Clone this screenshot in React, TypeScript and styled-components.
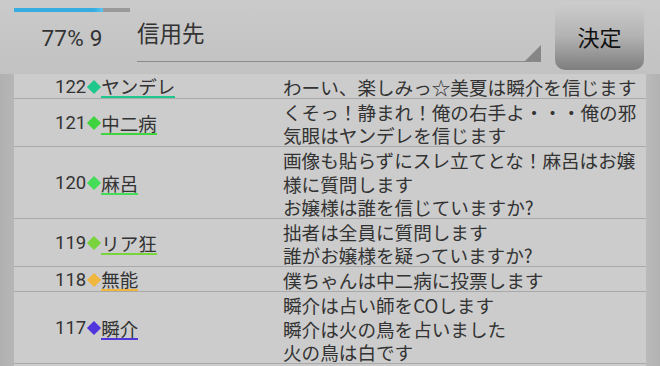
import React from "react";
import styled, { createGlobalStyle } from "styled-components";

const Global = createGlobalStyle`
  html, body { margin: 0; padding: 0; }
  body {
    width: 660px; height: 366px; overflow: hidden;
    background: #c3c3c3;
    font-family: Roboto, "Noto Sans CJK JP", sans-serif;
    color: #333;
  }
`;

const Page = styled.div`
  width: 660px; height: 366px; display: flex; flex-direction: column; overflow: hidden;
  background: linear-gradient(to bottom, #cacaca 0px, #c2c2c2 73px, #bdbdbd 100%);
`;

const Header = styled.div`
  height: 74px; display: flex; align-items: stretch; flex-shrink: 0;
`;

const Status = styled.div`
  width: 116px; margin-left: 14px; padding-top: 8px;
  display: flex; flex-direction: column; align-items: center;
`;

const Bar = styled.div`
  width: 100%; height: 4px; background: #999; overflow: hidden;
`;

const BarFill = styled.div`
  height: 100%; background: linear-gradient(to right, #36ace0 90%, #5cc6f0);
`;

const StatusText = styled.div`
  margin-top: 13px; font-family: Roboto, sans-serif; font-size: 22.5px; color: #333;
  letter-spacing: 0.2px;
`;

const Spinner = styled.div`
  margin-left: 7px; width: 404px; height: 62px; position: relative;
  border-bottom: 1px solid #8a8a8a; box-sizing: border-box;
  display: flex; align-items: center; padding-top: 3px;
  font-family: "Noto Sans CJK JP", sans-serif; font-size: 22.5px; color: #333;
`;

const Corner = styled.div`
  position: absolute; right: 0; bottom: 0; width: 0; height: 0;
  border-left: 16px solid transparent; border-bottom: 16px solid #868686;
`;

const Button = styled.div`
  margin: 2px 0 0 14px; width: 89px; height: 68px; border-radius: 10px;
  background: linear-gradient(to bottom, #cdcdcd 0%, #b3b3b3 50%, #7e7e7e 100%);
  display: flex; align-items: center; justify-content: center;
  font-family: "Noto Sans CJK JP", sans-serif; font-size: 22px; color: #111;
`;

const Body = styled.div`
  flex: 1; display: flex; min-height: 0;
`;

const Gutter = styled.div<{ $side: "l" | "r" }>`
  width: 14px; flex-shrink: 0;
  background: ${(p) =>
    p.$side === "l"
      ? "linear-gradient(to right, #b0b0b0, #b6b6b6)"
      : "linear-gradient(to right, #bababa, #b2b2b2)"};
`;

const List = styled.div`
  flex: 1; background: #cccccc; overflow: hidden;
`;

const Row = styled.div`
  display: grid; grid-template-columns: 269px 1fr;
  border-bottom: 1px solid #a9a9a9; padding-top: 1px;
`;

const Who = styled.div`
  display: flex; align-items: center; padding-left: 41px;
  font-size: 18.5px; line-height: 22px; color: #333;
`;

const Num = styled.span`
  font-family: Roboto, sans-serif;
`;

const Diamond = styled.span<{ $c: string }>`
  width: 10px; height: 10px; background: ${(p) => p.$c};
  transform: rotate(45deg); margin: 0 2px 0 3px; flex-shrink: 0;
`;

const Name = styled.span<{ $c: string }>`
  font-family: "Noto Sans CJK JP", sans-serif; line-height: 20px;
  border-bottom: 2px solid ${(p) => p.$c}; padding-top: 1px;
`;

const Msg = styled.div`
  font-family: "Noto Sans CJK JP", sans-serif; font-size: 18.6px; line-height: 23.15px;
  color: #333; padding-right: 4px; white-space: pre-line;
`;

const rows = [
  { n: 122, name: "ヤンデレ", c: "#1ec88c", msg: "わーい、楽しみっ☆美夏は瞬介を信じます" },
  { n: 121, name: "中二病", c: "#3fd43f", msg: "くそっ！静まれ！俺の右手よ・・・俺の邪\n気眼はヤンデレを信じます" },
  { n: 120, name: "麻呂", c: "#45dc58", msg: "画像も貼らずにスレ立てとな！麻呂はお嬢\n様に質問します\nお嬢様は誰を信じていますか?" },
  { n: 119, name: "リア狂", c: "#78d33c", msg: "拙者は全員に質問します\n誰がお嬢様を疑っていますか?" },
  { n: 118, name: "無能", c: "#f0b63e", msg: "僕ちゃんは中二病に投票します" },
  { n: 117, name: "瞬介", c: "#5034dc", msg: "瞬介は占い師をCOします\n瞬介は火の鳥を占いました\n火の鳥は白です" },
];

export default function App() {
  const progress = 77;
  return (
    <>
      <Global />
      <Page>
        <Header>
          <Status>
            <Bar>
              <BarFill style={{ width: `${progress}%` }} />
            </Bar>
            <StatusText>77% 9</StatusText>
          </Status>
          <Spinner>
            信用先
            <Corner />
          </Spinner>
          <Button>決定</Button>
        </Header>
        <Body>
          <Gutter $side="l" />
          <List>
            {rows.map((r) => (
              <Row key={r.n}>
                <Who>
                  <Num>{r.n}</Num>
                  <Diamond $c={r.c} />
                  <Name $c={r.c}>{r.name}</Name>
                </Who>
                <Msg>{r.msg}</Msg>
              </Row>
            ))}
          </List>
          <Gutter $side="r" />
        </Body>
      </Page>
    </>
  );
}
